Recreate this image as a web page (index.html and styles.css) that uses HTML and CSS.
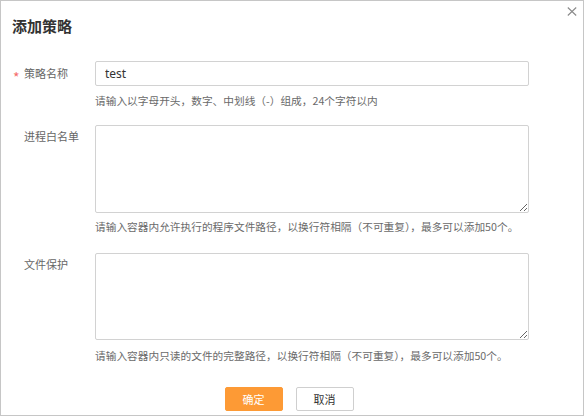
FILE: index.html
```html
<!DOCTYPE html>
<html lang="zh-CN">
<head>
<meta charset="utf-8">
<title>添加策略</title>
<link rel="stylesheet" href="styles.css">
</head>
<body>
<div class="dialog">
  <button class="close" aria-label="关闭">
    <svg width="10" height="9" viewBox="0 0 10 9"><path d="M0.8 0.5 L9.2 8.5 M9.2 0.5 L0.8 8.5" stroke="#8a8a8a" stroke-width="1.1" fill="none"/></svg>
  </button>
  <h1 class="title">添加策略</h1>
  <form class="form">
    <div class="row">
      <label class="label"><span class="star">*</span>策略名称</label>
      <div class="field">
        <input class="input" type="text" value="test">
        <p class="hint hint-first">请输入以字母开头，数字、中划线（-）组成，24个字符以内</p>
      </div>
    </div>
    <div class="row">
      <label class="label label-top">进程白名单</label>
      <div class="field">
        <textarea class="area area-1"></textarea>
        <p class="hint hint-second">请输入容器内允许执行的程序文件路径，以换行符相隔（不可重复），最多可以添加50个。</p>
      </div>
    </div>
    <div class="row">
      <label class="label label-top">文件保护</label>
      <div class="field">
        <textarea class="area area-2"></textarea>
        <p class="hint hint-third">请输入容器内只读的文件的完整路径，以换行符相隔（不可重复），最多可以添加50个。</p>
      </div>
    </div>
    <div class="actions">
      <button type="button" class="btn btn-primary">确定</button>
      <button type="button" class="btn btn-default">取消</button>
    </div>
  </form>
</div>
</body>
</html>
```

FILE: styles.css
```css
* { box-sizing: border-box; }
html, body { margin: 0; padding: 0; background: #fff; }
body {
  font-family: "Noto Sans", "Noto Sans CJK SC", sans-serif;
  color: #333;
}
.dialog {
  position: relative;
  width: 584px;
  height: 416px;
  border: 1px solid #c6c6c6;
  background: #fff;
}
.close {
  position: absolute;
  top: 5px;
  right: 5px;
  width: 12px;
  height: 11px;
  padding: 0;
  border: 0;
  background: transparent;
  display: flex;
  align-items: center;
  justify-content: center;
}
.title {
  margin: 0;
  padding: 15px 0 0 11px;
  font-size: 15px;
  line-height: 20px;
  font-weight: bold;
  color: #333;
  font-family: "Noto Sans CJK SC", sans-serif;
}
.form {
  margin-top: 25px;
}
.row {
  display: grid;
  grid-template-columns: 94px 434px;
}
.label {
  position: relative;
  padding-left: 23px;
  font-size: 11px;
  line-height: 25px;
  color: #666;
  font-family: "Noto Sans CJK SC", sans-serif;
}
.label-top { line-height: 22px; }
.star {
  position: absolute;
  left: 12px;
  top: 4px;
  color: #f56c6c;
  font-size: 14px;
}
.field { display: flex; flex-direction: column; }
.input {
  width: 434px;
  height: 25px;
  border: 1px solid #d2d2d2;
  border-radius: 2px;
  padding: 0 9px;
  font-size: 12px;
  color: #333;
  font-family: "Noto Sans", "Noto Sans CJK SC", sans-serif;
  outline: none;
}
.area {
  width: 434px;
  border: 1px solid #d2d2d2;
  border-radius: 2px;
  padding: 4px 9px;
  font-family: "Noto Sans", "Noto Sans CJK SC", sans-serif;
  outline: none;
  resize: vertical;
  display: block;
}
.area-1 { height: 88px; }
.area-2 { height: 87px; }
.hint {
  margin: 0;
  font-size: 10.7px;
  line-height: 16px;
  color: #6a6a6a;
  font-family: "Noto Sans CJK SC", sans-serif;
  white-space: nowrap;
}
.hint-first { margin-top: 7px; margin-bottom: 16px; }
.hint-second { margin-top: 6px; margin-bottom: 18px; }
.hint-third { margin-top: 8px; }
.actions {
  display: flex;
  justify-content: center;
  gap: 13px;
  margin-top: 23px;
  padding-right: 6px;
}
.btn {
  width: 58px;
  height: 24px;
  border-radius: 2px;
  font-size: 11px;
  font-family: "Noto Sans CJK SC", sans-serif;
  padding: 0;
}
.btn-primary {
  background: #fd9a35;
  border: 1px solid #fd9a35;
  color: #fff;
}
.btn-default {
  background: #fff;
  border: 1px solid #cfcfcf;
  color: #333;
}
```
